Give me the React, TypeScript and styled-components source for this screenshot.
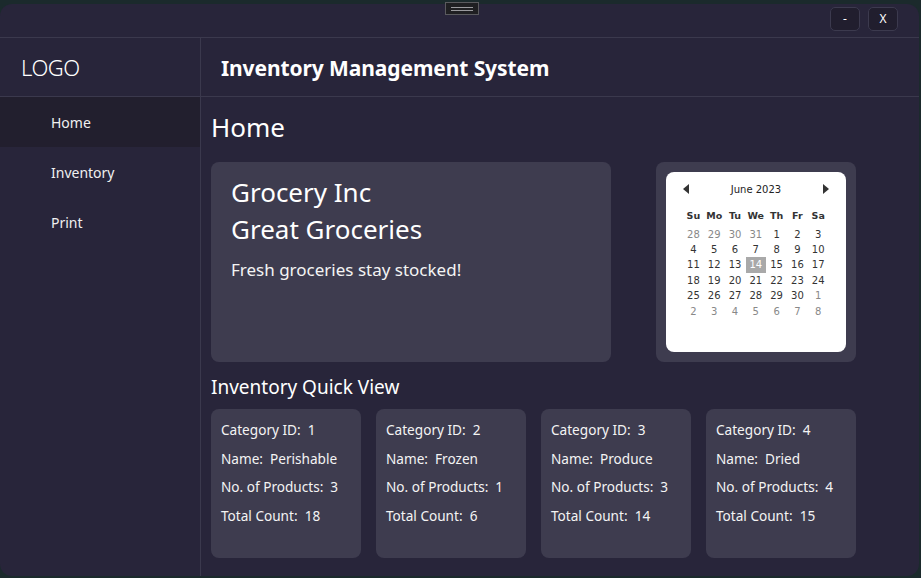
import React from "react";
import styled, { createGlobalStyle } from "styled-components";

const Global = createGlobalStyle`
  html, body { margin: 0; padding: 0; }
  body {
    background: #1b2a2c;
    width: 921px;
    height: 578px;
    overflow: hidden;
    font-family: "Noto Sans", "Open Sans", sans-serif;
  }
`;

const Desktop = styled.div`
  position: relative;
  width: 921px;
  height: 578px;
  padding: 4px 2px 2px 0;
  box-sizing: border-box;
`;

const Window = styled.div`
  width: 919px;
  height: 572px;
  background: #28253a;
  border-radius: 12px;
  display: flex;
  flex-direction: column;
  overflow: hidden;
  color: #fff;
`;

const SnapHandle = styled.div`
  position: absolute;
  left: 445px;
  top: 2px;
  width: 32px;
  height: 11px;
  background: #1f1f22;
  border: 1px solid #5a5a5e;
  display: flex;
  flex-direction: column;
  justify-content: center;
  align-items: center;
  gap: 2px;
  &::before, &::after {
    content: "";
    width: 22px;
    height: 1px;
    background: #9a9a9e;
  }
`;

const TitleBar = styled.div`
  height: 34px;
  flex: none;
  border-bottom: 1px solid #3b394d;
  display: flex;
  justify-content: flex-end;
  align-items: center;
  gap: 8px;
  padding-right: 21px;
  box-sizing: border-box;
`;

const WinButton = styled.button`
  width: 30px;
  height: 24px;
  margin-top: -4px;
  background: #211e2e;
  border: 1px solid #3c3a4e;
  border-radius: 5px;
  color: #fff;
  font-family: "Noto Sans", sans-serif;
  font-size: 12px;
  padding: 0;
  display: flex;
  align-items: center;
  justify-content: center;
`;

const Body = styled.div`
  flex: 1;
  display: flex;
  min-height: 0;
`;

const Sidebar = styled.div`
  width: 201px;
  flex: none;
  border-right: 1px solid #3b394d;
  box-sizing: border-box;
  display: flex;
  flex-direction: column;
`;

const LogoCell = styled.div`
  height: 59px;
  border-bottom: 1px solid #3b394d;
  box-sizing: border-box;
  display: flex;
  align-items: center;
  padding-left: 21px;
  font-size: 22px;
  font-weight: 300;
  letter-spacing: -0.5px;
`;

const NavItem = styled.div<{ $active?: boolean }>`
  height: 50px;
  display: flex;
  align-items: center;
  padding-left: 51px;
  font-size: 14px;
  color: #f0f0f0;
  background: ${(p) => (p.$active ? "#221f2e" : "transparent")};
`;

const Main = styled.div`
  flex: 1;
  display: flex;
  flex-direction: column;
`;

const Header = styled.div`
  height: 59px;
  flex: none;
  border-bottom: 1px solid #3b394d;
  box-sizing: border-box;
  display: flex;
  align-items: center;
  padding-left: 20px;
  padding-top: 2px;
  font-size: 21px;
  font-weight: 700;
  letter-spacing: -0.1px;
`;

const Content = styled.div`
  padding: 0 0 0 10px;
  display: flex;
  flex-direction: column;
`;

const PageTitle = styled.div`
  height: 65px;
  display: flex;
  align-items: center;
  font-size: 26px;
  font-weight: 400;
  padding-bottom: 6px;
  box-sizing: border-box;
`;

const TopRow = styled.div`
  display: flex;
  gap: 45px;
`;

const Card = styled.div`
  background: #3e3c4f;
  border-radius: 8px;
  box-sizing: border-box;
`;

const Hero = styled(Card)`
  width: 400px;
  height: 200px;
  padding: 12px 20px;
`;

const HeroTitle = styled.div`
  font-size: 26px;
  line-height: 37px;
`;

const HeroSub = styled.div`
  font-size: 17px;
  margin-top: 10px;
  color: #f4f4f4;
`;

const CalendarCard = styled(Card)`
  width: 200px;
  height: 200px;
  padding: 10px;
`;

const Calendar = styled.div`
  background: #fff;
  border-radius: 8px;
  height: 100%;
  font-family: "DejaVu Sans", Verdana, sans-serif;
  color: #333;
  display: flex;
  flex-direction: column;
  padding: 7px 12px 0 12px;
  box-sizing: border-box;
`;

const CalHeader = styled.div`
  display: flex;
  align-items: center;
  justify-content: space-between;
  height: 20px;
  font-size: 10px;
  color: #222;
  padding: 0 5px 0 5px;
`;

const Arrow = styled.div<{ $dir: "left" | "right" }>`
  width: 0;
  height: 0;
  border-top: 5px solid transparent;
  border-bottom: 5px solid transparent;
  ${(p) =>
    p.$dir === "left"
      ? "border-right: 6px solid #333;"
      : "border-left: 6px solid #333;"}
`;

const DayGrid = styled.div`
  display: grid;
  grid-template-columns: repeat(7, 20.8px);
  grid-auto-rows: 15.4px;
  margin-top: 12px;
  margin-left: 5px;
`;

const DowCell = styled.div`
  font-size: 9.5px;
  font-weight: 700;
  color: #333;
  display: flex;
  align-items: center;
  justify-content: center;
  margin-bottom: 6px;
`;

const DayCell = styled.div<{ $muted?: boolean; $selected?: boolean }>`
  font-size: 10px;
  display: flex;
  align-items: center;
  justify-content: center;
  color: ${(p) => (p.$selected ? "#fff" : p.$muted ? "#888" : "#333")};
  background: ${(p) => (p.$selected ? "#a9a9a9" : "transparent")};
  margin: ${(p) => (p.$selected ? "0 0.5px" : "0")};
`;

const SectionTitle = styled.div`
  font-size: 19px;
  line-height: 26px;
  padding-top: 12px;
  height: 47px;
  box-sizing: border-box;
`;

const QuickRow = styled.div`
  display: flex;
  gap: 15px;
`;

const QuickCard = styled(Card)`
  width: 150px;
  height: 149px;
  padding: 6px 10px;
  display: flex;
  flex-direction: column;
`;

const QuickLine = styled.div`
  height: 28.7px;
  flex: none;
  font-size: 13.6px;
  color: #f4f4f4;
  display: flex;
  align-items: center;
  white-space: pre;
`;

const categories = [
  { id: 1, name: "Perishable", products: 3, total: 18 },
  { id: 2, name: "Frozen", products: 1, total: 6 },
  { id: 3, name: "Produce", products: 3, total: 14 },
  { id: 4, name: "Dried", products: 4, total: 15 },
];

const days: { d: number; muted?: boolean }[] = [
  ...[28, 29, 30, 31].map((d) => ({ d, muted: true })),
  ...Array.from({ length: 30 }, (_, i) => ({ d: i + 1 })),
  ...[1, 2, 3, 4, 5, 6, 7, 8].map((d) => ({ d, muted: true })),
];

export default function App() {
  return (
    <>
      <Global />
      <Desktop>
        <SnapHandle />
        <Window>
          <TitleBar>
            <WinButton>-</WinButton>
            <WinButton>X</WinButton>
          </TitleBar>
          <Body>
            <Sidebar>
              <LogoCell>LOGO</LogoCell>
              <NavItem $active>Home</NavItem>
              <NavItem>Inventory</NavItem>
              <NavItem>Print</NavItem>
            </Sidebar>
            <Main>
              <Header>Inventory Management System</Header>
              <Content>
                <PageTitle>Home</PageTitle>
                <TopRow>
                  <Hero>
                    <HeroTitle>Grocery Inc</HeroTitle>
                    <HeroTitle>Great Groceries</HeroTitle>
                    <HeroSub>Fresh groceries stay stocked!</HeroSub>
                  </Hero>
                  <CalendarCard>
                    <Calendar>
                      <CalHeader>
                        <Arrow $dir="left" />
                        <span>June 2023</span>
                        <Arrow $dir="right" />
                      </CalHeader>
                      <DayGrid>
                        {["Su", "Mo", "Tu", "We", "Th", "Fr", "Sa"].map((d) => (
                          <DowCell key={d}>{d}</DowCell>
                        ))}
                        {days.map((x, i) => (
                          <DayCell
                            key={i}
                            $muted={x.muted}
                            $selected={!x.muted && x.d === 14}
                          >
                            {x.d}
                          </DayCell>
                        ))}
                      </DayGrid>
                    </Calendar>
                  </CalendarCard>
                </TopRow>
                <SectionTitle>Inventory Quick View</SectionTitle>
                <QuickRow>
                  {categories.map((c) => (
                    <QuickCard key={c.id}>
                      <QuickLine>{`Category ID:  ${c.id}`}</QuickLine>
                      <QuickLine>{`Name:  ${c.name}`}</QuickLine>
                      <QuickLine>{`No. of Products:  ${c.products}`}</QuickLine>
                      <QuickLine>{`Total Count:  ${c.total}`}</QuickLine>
                    </QuickCard>
                  ))}
                </QuickRow>
              </Content>
            </Main>
          </Body>
        </Window>
      </Desktop>
    </>
  );
}
